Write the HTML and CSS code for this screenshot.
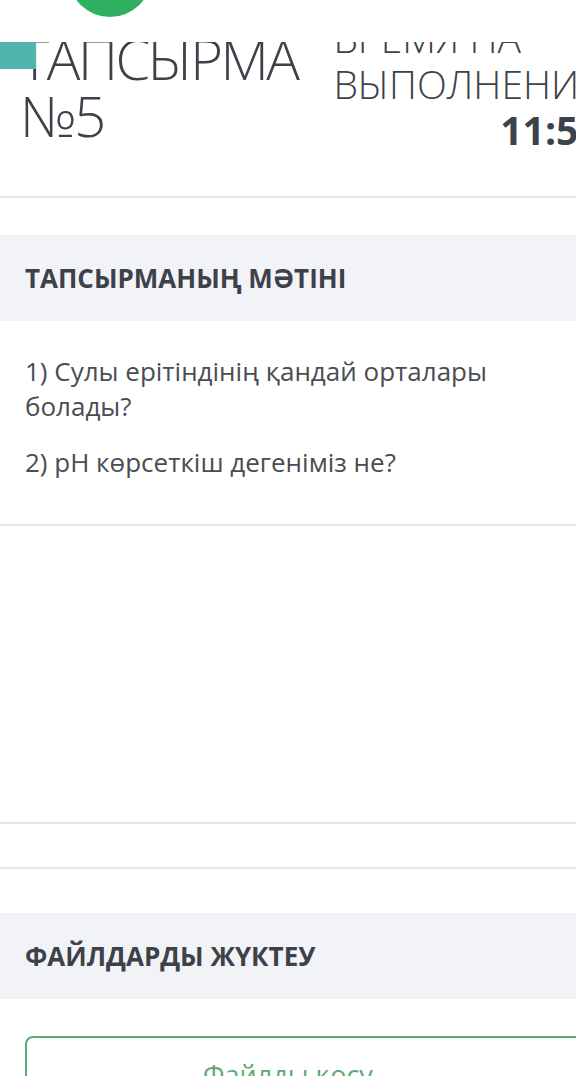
FILE: index.html
```html
<!DOCTYPE html>
<html lang="kk">

<head>
    <meta charset="utf-8" />
    <meta name="viewport" content="width=device-width, initial-scale=1" />
    <title>Тапсырма №5</title>
    <link rel="stylesheet" href="styles.css">
</head>

<body>
    <div class="topbar">
        <span class="topbar-logo"></span>
    </div>
    <span class="side-tab"></span>

    <div class="page">
        <header class="task-head">
            <h1 class="task-title">ТАПСЫРМА<br />№5</h1>
            <div class="timer">
                <div class="timer-label">ВРЕМЯ НА<br />ВЫПОЛНЕНИЕ</div>
                <div class="timer-value">11:52</div>
            </div>
        </header>

        <section class="block">
            <h2 class="block-title">ТАПСЫРМАНЫҢ МӘТІНІ</h2>
            <div class="task-text">
                <p>1) Сулы ерітіндінің қандай орталары болады?</p>
                <p>2) pH көрсеткіш дегеніміз не?</p>
            </div>
        </section>

        <div class="answer-area"></div>
        <div class="spacer"></div>

        <section class="block upload">
            <h2 class="block-title">ФАЙЛДАРДЫ ЖҮКТЕУ</h2>
            <button class="add-file">Файлды қосу</button>
        </section>
    </div>
</body>

</html>
```

FILE: styles.css
```css
:root {
    --text: #3d4149;
    --muted: #4a4d52;
    --line: #e6e6e6;
    --panel: #f2f3f7;
    --green: #5faa72;
}

* {
    box-sizing: border-box;
}

body {
    margin: 0;
    font-family: "Open Sans", "Noto Sans", sans-serif;
    color: var(--text);
    background: #fff;
    overflow-x: hidden;
}

.page {
    width: 620px;
}

.topbar {
    position: absolute;
    top: 0;
    left: 0;
    width: 100%;
    height: 42px;
    background: #fff;
    z-index: 2;
}

.topbar-logo {
    position: absolute;
    left: 69px;
    top: -63px;
    width: 82px;
    height: 80px;
    border-radius: 50%;
    background: #2fb05e;
}

.side-tab {
    position: absolute;
    left: 0;
    top: 42px;
    width: 36px;
    height: 27px;
    background: #52b5ab;
    z-index: 2;
}

/* header */
.task-head {
    display: flex;
    align-items: flex-start;
    padding: 15px 0 43px 20px;
    border-bottom: 2px solid var(--line);
}

.task-title {
    margin: 15px 0 0;
    font-size: 56px;
    font-weight: 300;
    line-height: 57px;
    letter-spacing: -2.5px;
    flex: none;
}

.timer {
    margin-left: 36px;
    font-size: 39px;
    font-weight: 300;
    line-height: 46px;
    white-space: nowrap;
}

.timer-value {
    text-align: right;
    font-weight: 700;
}

/* blocks */
.block {
    margin-top: 37px;
}

.block-title {
    margin: 0;
    height: 86px;
    display: flex;
    align-items: center;
    padding: 0 25px;
    background: var(--panel);
    font-size: 26px;
    font-weight: 700;
}

.task-text {
    padding: 33px 25px 44px;
    border-bottom: 2px solid var(--line);
    font-size: 26px;
    line-height: 35px;
    color: var(--muted);
}

.task-text p {
    margin: 0 0 21px;
    max-width: 520px;
}

.task-text p:last-child {
    margin-bottom: 0;
}

.answer-area {
    height: 298px;
    border-bottom: 2px solid var(--line);
}

.spacer {
    height: 45px;
    border-bottom: 2px solid var(--line);
}

.upload {
    margin-top: 44px;
}

.add-file {
    display: block;
    width: calc(100% - 50px);
    margin: 37px 25px 0;
    padding: 20px 44px 18px 0;
    font-family: inherit;
    font-size: 27px;
    line-height: 34px;
    color: var(--green);
    background: #fff;
    border: 2px solid var(--green);
    border-radius: 8px;
    cursor: pointer;
}
```
